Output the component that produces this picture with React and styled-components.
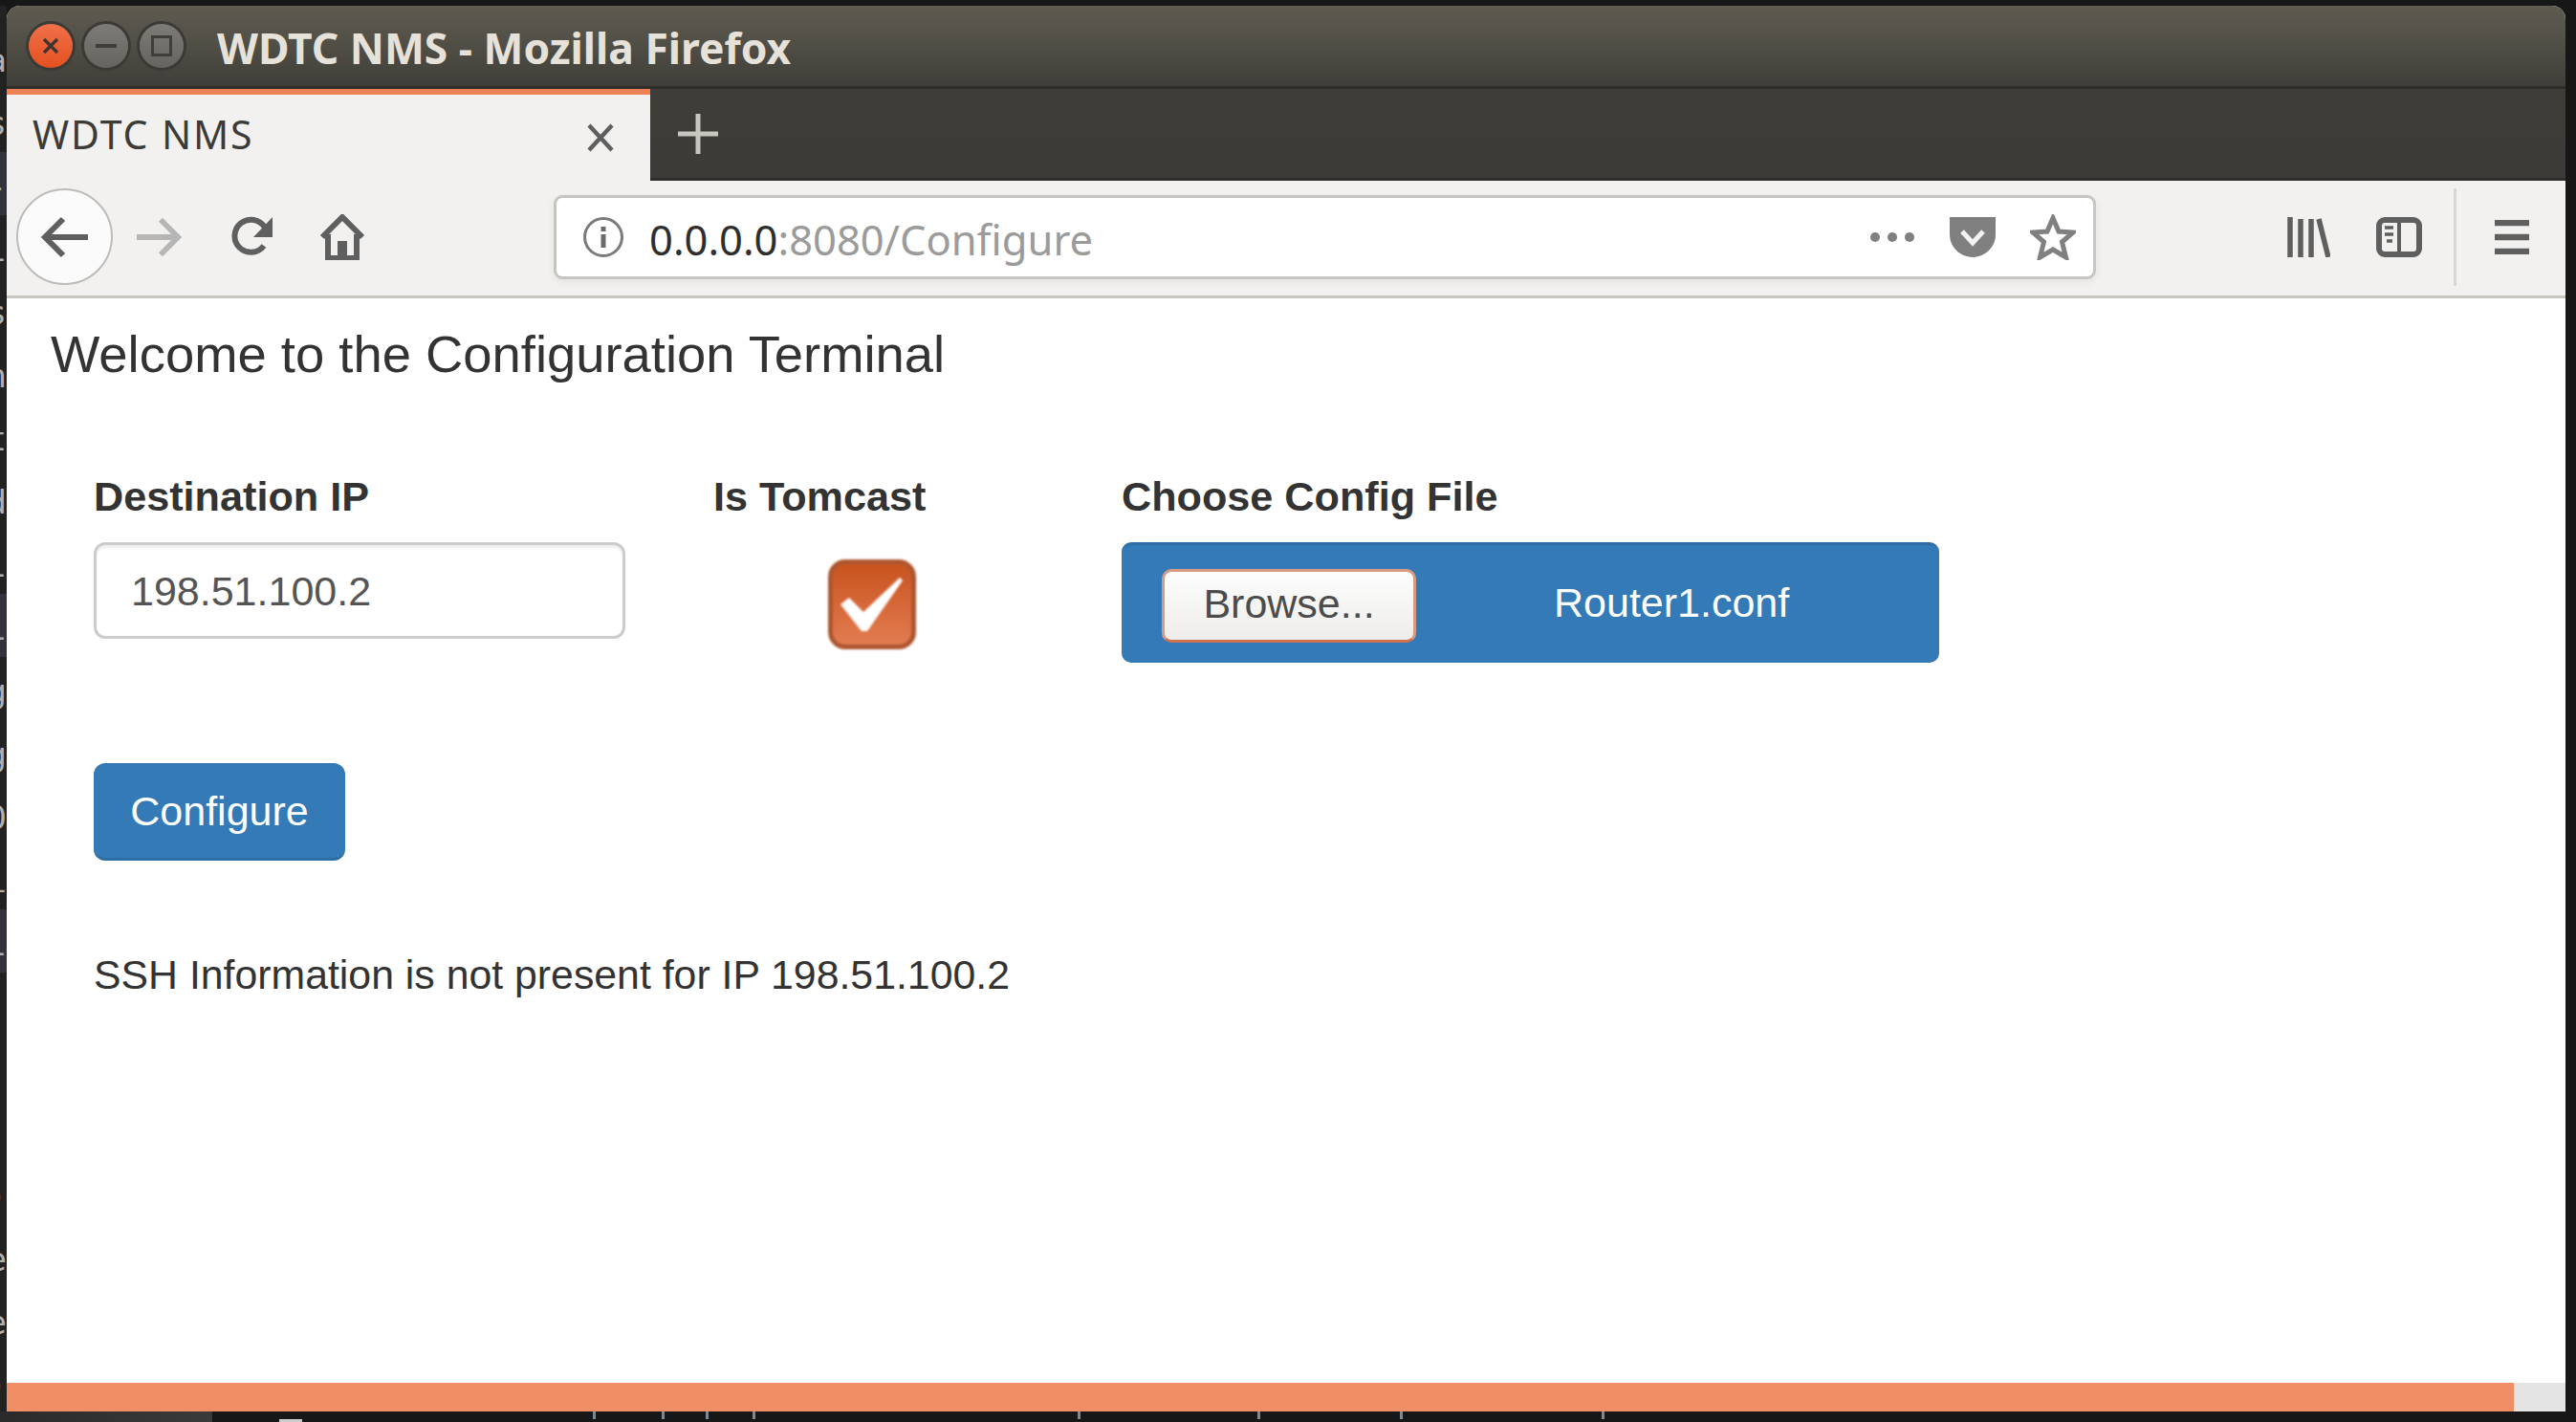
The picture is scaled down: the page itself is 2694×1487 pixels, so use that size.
import React from "react";
import styled, { createGlobalStyle } from "styled-components";

const GlobalStyle = createGlobalStyle`
  html, body {
    margin: 0;
    padding: 0;
    background: #171717;
  }
  * {
    box-sizing: border-box;
  }
`;

const UI_FONT = `"Noto Sans", "Open Sans", sans-serif`;
const PAGE_FONT = `"Liberation Sans", Arial, sans-serif`;

// terminal behind the window, cut off by the window's left edge.
// only slivers show in the screenshot, so the letters are best guesses
const TERMINAL_LINES = [
  { c: "a" },
  { c: "s" },
  { c: "-", band: true },
  { c: "l" },
  { c: "s" },
  { c: "h" },
  { c: "t" },
  { c: "d" },
  { c: "l" },
  { c: "l", band: true },
  { c: "g" },
  { c: "g" },
  { c: "0" },
  { c: "i" },
  { c: "l", band: true },
  { c: "" },
  { c: "" },
  { c: "." },
  { c: ")" },
  { c: "e" },
  { c: "e" },
  { c: ")" },
];

const BOTTOM_TICKS = [307, 72, 46, 49, 340, 188, 149, 211];

export default function App() {
  return (
    <>
      <GlobalStyle />
      <Desktop>
        <MainRow>
          <TerminalEdge>
            {TERMINAL_LINES.map((line, i) => (
              <TerminalLine key={i} $band={line.band}>
                {line.c}
              </TerminalLine>
            ))}
          </TerminalEdge>
          <Window>
            <Header>
              <TitleRow>
                <Controls>
                  <WinButton $close>
                    <svg width="20" height="20" viewBox="0 0 20 20">
                      <path d="M3 3l14 14M17 3L3 17" stroke="#3d3431" strokeWidth="3.2" fill="none" />
                    </svg>
                  </WinButton>
                  <WinButton>
                    <svg width="22" height="6" viewBox="0 0 22 6">
                      <rect width="22" height="4" y="1" fill="#3f3e3a" />
                    </svg>
                  </WinButton>
                  <WinButton>
                    <svg width="22" height="22" viewBox="0 0 22 22">
                      <rect x="1.5" y="1.5" width="19" height="19" fill="none" stroke="#3f3e3a" strokeWidth="3" />
                    </svg>
                  </WinButton>
                </Controls>
                <WindowTitle>WDTC NMS - Mozilla Firefox</WindowTitle>
              </TitleRow>
              <TabRow>
                <Tab>
                  <TabTitle>WDTC NMS</TabTitle>
                  <svg width="30" height="30" viewBox="0 0 30 30">
                    <path d="M3 2l24 26M27 2L3 28" stroke="#5f5f5f" strokeWidth="4.5" fill="none" />
                  </svg>
                </Tab>
                <NewTab>
                  <svg width="42" height="42" viewBox="0 0 42 42">
                    <path d="M21 0v42M0 21h42" stroke="#c9c6c0" strokeWidth="5" fill="none" />
                  </svg>
                </NewTab>
              </TabRow>
            </Header>

            <Toolbar>
              <BackButton>
                <svg width="50" height="44" viewBox="0 0 50 44">
                  <path d="M23 3L4 22l19 19M5 22h44" stroke="#5f5f5f" strokeWidth="6" fill="none" />
                </svg>
              </BackButton>
              <ToolIcon $left={24} $w={48}>
                <svg width="48" height="44" viewBox="0 0 50 44">
                  <path d="M27 3l19 19-19 19M45 22H1" stroke="#b6b6b6" strokeWidth="6" fill="none" />
                </svg>
              </ToolIcon>
              <ToolIcon $left={51} $w={45}>
                <svg width="45" height="44" viewBox="0 0 45 44">
                  <path d="M35 31a17 17 0 1 1 1-19" stroke="#5f5f5f" strokeWidth="6" fill="none" />
                  <path d="M44 1v21H24z" fill="#5f5f5f" />
                </svg>
              </ToolIcon>
              <ToolIcon $left={48} $w={48}>
                <svg width="48" height="48" viewBox="0 0 48 48">
                  <path d="M3 24L24 3l21 21M9 21v25h30V21" stroke="#5f5f5f" strokeWidth="6" fill="none" />
                  <rect x="19" y="28" width="10" height="18" fill="#5f5f5f" />
                </svg>
              </ToolIcon>

              <UrlBar>
                <svg width="42" height="42" viewBox="0 0 42 42">
                  <circle cx="21" cy="21" r="19.5" stroke="#7a7a7a" strokeWidth="3" fill="none" />
                  <rect x="18.5" y="10" width="5" height="5" fill="#6a6a6a" />
                  <rect x="18.5" y="18" width="5" height="14" fill="#6a6a6a" />
                </svg>
                <UrlText>
                  0.0.0.0<UrlDim>:8080/Configure</UrlDim>
                </UrlText>
                <UrlIcons>
                  <svg width="48" height="10" viewBox="0 0 48 10">
                    <circle cx="6" cy="5" r="5" fill="#808080" />
                    <circle cx="24" cy="5" r="5" fill="#808080" />
                    <circle cx="42" cy="5" r="5" fill="#808080" />
                  </svg>
                  <svg width="48" height="42" viewBox="0 0 48 42">
                    <path d="M0 0h48v18C48 34 34 42 24 42S0 34 0 18z" fill="#808080" />
                    <path d="M13 15l11 12 11-12" stroke="#f2f2f2" strokeWidth="5" fill="none" />
                  </svg>
                  <svg width="48" height="48" viewBox="0 0 48 48">
                    <path
                      d="M24 4l6 14 15 1-11.500 10 4 16-13.500-8-13.500 8 4-16L3 19l15-1z"
                      stroke="#808080"
                      strokeWidth="5"
                      fill="none"
                    />
                  </svg>
                </UrlIcons>
              </UrlBar>

              <ToolIcon $left={200} $w={45}>
                <svg width="45" height="42" viewBox="0 0 45 42">
                  <path d="M3 0v42M14 2v40M25 2v40M33 2l10 40" stroke="#5f5f5f" strokeWidth="5.500" fill="none" />
                </svg>
              </ToolIcon>
              <ToolIcon $left={48} $w={48}>
                <svg width="48" height="42" viewBox="0 0 48 42">
                  <rect x="3" y="3" width="42" height="36" rx="6" stroke="#5f5f5f" strokeWidth="6" fill="none" />
                  <path d="M24 3v36" stroke="#5f5f5f" strokeWidth="4" />
                  <path d="M9 11h9M9 18h9M11 25h6" stroke="#5f5f5f" strokeWidth="3.500" />
                </svg>
              </ToolIcon>
              <ToolDivider />
              <ToolIcon $left={40} $w={36}>
                <svg width="36" height="36" viewBox="0 0 36 36">
                  <path d="M0 3h36M0 18h36M0 33h36" stroke="#5f5f5f" strokeWidth="6.500" />
                </svg>
              </ToolIcon>
            </Toolbar>

            <Content>
              <Heading>Welcome to the Configuration Terminal</Heading>
              <Form>
                <FormRow>
                  <IpField>
                    <Label>Destination IP</Label>
                    <TextInput readOnly value="198.51.100.2" />
                  </IpField>
                  <TomcastField>
                    <Label>Is Tomcast</Label>
                    <CheckBox>
                      <svg width="70" height="60" viewBox="0 0 70 60">
                        <path d="M2 30l9-7 15 15L64 2l3 3-37 53h-6z" fill="#fff" />
                      </svg>
                    </CheckBox>
                  </TomcastField>
                  <FileField>
                    <Label>Choose Config File</Label>
                    <FilePanel>
                      <BrowseButton>Browse...</BrowseButton>
                      <FileName>Router1.conf</FileName>
                    </FilePanel>
                  </FileField>
                </FormRow>
                <SubmitButton>Configure</SubmitButton>
                <Message>SSH Information is not present for IP 198.51.100.2</Message>
              </Form>
            </Content>

            <Footer>
              <FooterProgress />
              <FooterRest />
            </Footer>
          </Window>
        </MainRow>
        <BottomStrip>
          <StripShade />
          <StripBar />
          {BOTTOM_TICKS.map((left, i) => (
            <StripTick key={i} $left={left} />
          ))}
        </BottomStrip>
      </Desktop>
    </>
  );
}

const Desktop = styled.div`
  width: 2694px;
  height: 1487px;
  padding-top: 6px;
  display: flex;
  flex-direction: column;
  background: #171717;
  overflow: hidden;
`;

const MainRow = styled.div`
  flex: 1;
  min-height: 0;
  display: flex;
  padding-right: 11px;
`;

const TerminalEdge = styled.div`
  width: 7px;
  flex-shrink: 0;
  padding-top: 21px;
  overflow: hidden;
  background: #222;
`;

const TerminalLine = styled.div`
  height: 66px;
  padding-top: 16px;
  display: flex;
  justify-content: flex-end;
  overflow: hidden;
  font: 400 34px/40px "DejaVu Sans Mono", monospace;
  color: #b0b0b0;
  background: ${(p) => (p.$band ? "#33333d" : "transparent")};
`;

const Window = styled.div`
  flex: 1;
  min-width: 0;
  display: flex;
  flex-direction: column;
  background: #fff;
  border-radius: 14px 14px 0 0;
  overflow: hidden;
`;

const Header = styled.div`
  height: 183px;
  display: flex;
  flex-direction: column;
  flex-shrink: 0;
  background: linear-gradient(#5e5c51 0, #56544a 25px, #3e3d38 87px, #3c3b37 100%);
`;

const TitleRow = styled.div`
  height: 84px;
  display: flex;
  align-items: center;
  padding: 0 0 0 23px;
  flex-shrink: 0;
`;

const Controls = styled.div`
  display: flex;
  gap: 12px;
`;

const WinButton = styled.div`
  width: 46px;
  height: 46px;
  border-radius: 50%;
  display: flex;
  align-items: center;
  justify-content: center;
  background: ${(p) =>
    p.$close ? "linear-gradient(#f0714a, #e4501f)" : "linear-gradient(#7c7b75, #65645e)"};
  box-shadow: 0 0 0 3px #3b3a36;
`;

const WindowTitle = styled.div`
  margin: 3px 0 0 35px;
  font: 700 44.4px ${UI_FONT};
  color: #e6e2da;
  white-space: nowrap;
`;

const TabRow = styled.div`
  flex: 1;
  display: flex;
  align-items: stretch;
  border-top: 3px solid #2e2d2a;
  border-bottom: 3px solid #2e2d2a;
`;

const Tab = styled.div`
  width: 673px;
  margin-bottom: -3px;
  display: flex;
  align-items: center;
  justify-content: space-between;
  padding: 0 37px 0 27px;
  background: #f2f1ef;
  border-top: 6px solid #f08055;
`;

const TabTitle = styled.div`
  margin-bottom: 8px;
  font: 400 41px ${UI_FONT};
  letter-spacing: 1.9px;
  color: #3c3b37;
`;

const NewTab = styled.div`
  display: flex;
  align-items: center;
  margin-left: 29px;
`;

const Toolbar = styled.div`
  height: 123px;
  flex-shrink: 0;
  display: flex;
  align-items: center;
  padding-left: 10px;
  padding-bottom: 3px;
  background: #f2f1ef;
  border-bottom: 3px solid #c8c5c0;
`;

const BackButton = styled.div`
  width: 101px;
  height: 101px;
  border-radius: 50%;
  display: flex;
  align-items: center;
  justify-content: center;
  background: #fbfbfb;
  border: 2px solid #bdbcb9;
`;

const ToolIcon = styled.div`
  width: ${(p) => p.$w}px;
  margin-left: ${(p) => p.$left}px;
  display: flex;
  align-items: center;
  justify-content: center;
  flex-shrink: 0;
`;

const ToolDivider = styled.div`
  width: 3px;
  height: 102px;
  margin-left: 33px;
  background: #d9d7d4;
`;

const UrlBar = styled.div`
  width: 1613px;
  height: 88px;
  margin-left: 197px;
  padding: 0 18px 0 28px;
  display: flex;
  align-items: center;
  background: #fff;
  border: 3px solid #c8c5c0;
  border-radius: 9px;
  box-shadow: 0 3px 8px rgba(0, 0, 0, 0.06);
`;

const UrlText = styled.div`
  margin: 5px 0 0 27px;
  font: 400 43.5px ${UI_FONT};
  color: #2e2e2e;
  white-space: nowrap;
`;

const UrlDim = styled.span`
  color: #9b9b9b;
`;

const UrlIcons = styled.div`
  margin-left: auto;
  display: flex;
  align-items: center;
  gap: 36px;
`;

const Content = styled.div`
  flex: 1;
  padding: 29px 0 0 46px;
  background: #fff;
  color: #333;
  font-family: ${PAGE_FONT};
`;

const Heading = styled.h4`
  margin: 0;
  font-size: 54.4px;
  font-weight: 400;
  line-height: 60px;
`;

const Form = styled.div`
  padding: 93px 0 0 45px;
`;

const FormRow = styled.div`
  display: flex;
  align-items: flex-start;
`;

const Label = styled.div`
  font-size: 43.2px;
  font-weight: 700;
  line-height: 50px;
`;

const IpField = styled.div`
  width: 648px;
`;

const TomcastField = styled.div`
  width: 427px;
`;

const FileField = styled.div`
  width: 855px;
`;

const TextInput = styled.input`
  display: block;
  width: 556px;
  height: 101px;
  margin-top: 23px;
  padding: 2px 36px 0;
  font: 400 43px ${PAGE_FONT};
  color: #555;
  background: #fff;
  border: 3px solid #ccc;
  border-radius: 12px;
  box-shadow: inset 0 3px 3px rgba(0, 0, 0, 0.07);
  outline: none;
`;

const CheckBox = styled.div`
  width: 92px;
  height: 94px;
  margin: 41px 0 0 120px;
  display: flex;
  align-items: center;
  justify-content: center;
  border-radius: 18px;
  background: linear-gradient(#c8531e, #e37c52);
  border: 5px solid #ad5630;
  filter: blur(1.2px);
`;

const FilePanel = styled.div`
  height: 126px;
  margin-top: 23px;
  padding: 25px 0 0 42px;
  display: flex;
  align-items: flex-start;
  background: #337ab7;
  border-top: 3px solid #2e6da4;
  border-radius: 10px;
`;

const BrowseButton = styled.div`
  width: 266px;
  height: 77px;
  padding-bottom: 5px;
  display: flex;
  align-items: center;
  justify-content: center;
  font-size: 43px;
  color: #4c4c4c;
  background: linear-gradient(#fdfdfd, #eeedeb);
  border: 3px solid #d79b85;
  border-bottom-color: #d0714f;
  border-radius: 10px;
`;

const FileName = styled.div`
  margin: 10px 0 0 144px;
  font-size: 43px;
  line-height: 50px;
  color: #fff;
`;

const SubmitButton = styled.div`
  width: 263px;
  height: 102px;
  margin-top: 105px;
  padding-top: 2px;
  display: flex;
  align-items: center;
  justify-content: center;
  font-size: 43px;
  color: #fff;
  background: #337ab7;
  border-bottom: 3px solid #2e6da4;
  border-radius: 12px;
`;

const Message = styled.div`
  margin-top: 94px;
  font-size: 42.8px;
  line-height: 50px;
`;

const Footer = styled.div`
  height: 30px;
  flex-shrink: 0;
  display: flex;
`;

const FooterProgress = styled.div`
  width: 2622px;
  background: #f08e66;
`;

const FooterRest = styled.div`
  flex: 1;
  background: #e4e4e4;
`;

const BottomStrip = styled.div`
  height: 11px;
  flex-shrink: 0;
  display: flex;
  align-items: flex-start;
`;

const StripShade = styled.div`
  width: 222px;
  height: 100%;
  background: linear-gradient(90deg, #2a2a2a, #3a3a3a);
`;

const StripBar = styled.div`
  width: 24px;
  height: 3px;
  margin: 8px 0 0 70px;
  background: #ccc;
`;

const StripTick = styled.div`
  width: 3px;
  height: 8px;
  margin-left: ${(p) => p.$left - 3}px;
  background: #7f8a94;
`;
